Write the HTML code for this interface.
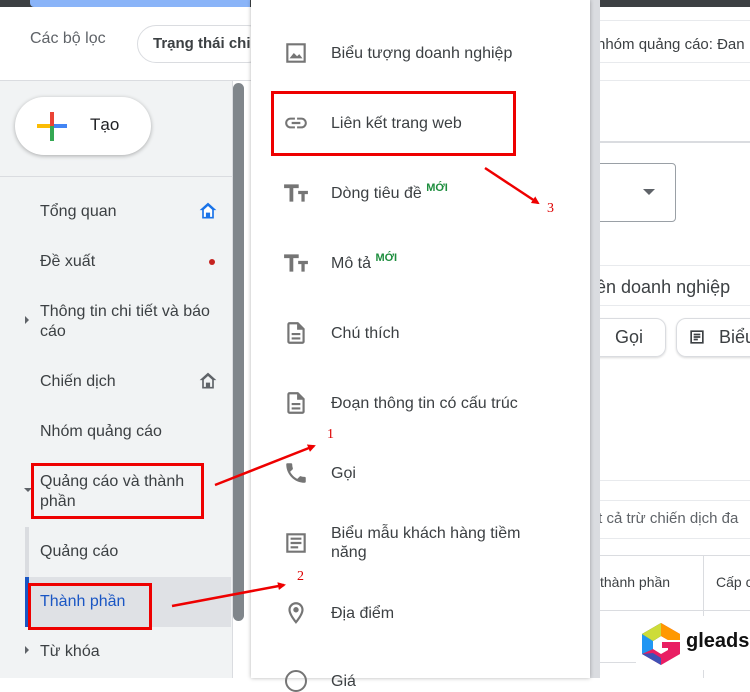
<!DOCTYPE html>
<html><head><meta charset="utf-8"><style>
*{margin:0;padding:0;box-sizing:border-box}
body{width:750px;height:678px;overflow:hidden;position:relative;background:#fff;font-family:"Liberation Sans",Arial,sans-serif;color:#3c4043}
.a{position:absolute;white-space:nowrap}
.nav{position:absolute;left:40px;font-size:16px;color:#3c4043;line-height:20px}
.mi{position:absolute;left:331px;font-size:16px;color:#3c4043;line-height:19px}
.ic{position:absolute;left:283px;width:26px;height:26px}
.new{color:#1e8e3e;font-size:11px;font-weight:bold;vertical-align:top;position:relative;top:-5px}
.rb{position:absolute;border:3px solid #ee0000}
.num{position:absolute;color:#d00;font-family:"Liberation Serif",serif;font-size:14px}
</style></head><body>
<div class="a" style="left:0;top:0;width:750px;height:7px;background:#3c4043"></div>
<div class="a" style="left:30px;top:0;width:220px;height:7px;background:#8ab4f8;border-radius:0 0 0 4px"></div>
<div class="a" style="left:0;top:80px;width:251px;height:1px;background:#dadce0"></div>
<div class="a" style="left:30px;top:30px;font-size:16px;color:#5f6368">Các bộ lọc</div>
<div class="a" style="left:137px;top:25px;width:130px;height:38px;border:1px solid #dadce0;border-radius:19px;font-size:15px;font-weight:bold;padding:9px 0 0 15px;color:#3c4043">Trạng thái chi</div>
<div class="a" style="left:0;top:81px;width:232px;height:597px;background:#f1f3f4"></div>
<div class="a" style="left:0;top:176px;width:232px;height:1px;background:#dadce0"></div>
<div class="a" style="left:232px;top:81px;width:1px;height:597px;background:#dadce0"></div>
<div class="a" style="left:233px;top:83px;width:11px;height:538px;background:#80868b;border-radius:6px"></div>
<div class="a" style="left:15px;top:97px;width:136px;height:58px;background:#fff;border-radius:29px;box-shadow:0 1px 4px rgba(0,0,0,.3)"></div>
<div class="a" style="left:37px;top:124px;width:30px;height:4px;background:#fbbc04"></div>
<div class="a" style="left:50px;top:112px;width:4px;height:14px;background:#ea4335"></div>
<div class="a" style="left:50px;top:126px;width:4px;height:15px;background:#34a853"></div>
<div class="a" style="left:54px;top:124px;width:13px;height:4px;background:#4285f4"></div>
<div class="a" style="left:90px;top:115px;font-size:17px;color:#202124">Tạo</div>
<div class="nav" style="top:202px">Tổng quan</div>
<svg class="a" style="left:198px;top:201px" width="20" height="20" viewBox="0 0 24 24"><path d="M12 2L2 11h3v10h14V11h3z" fill="#1a73e8"/><path d="M12 6l-5 4.5V19h2.5v-5h5v5H17v-8.5z" fill="#fff"/></svg>
<div class="nav" style="top:252px">Đề xuất</div>
<div class="a" style="left:209px;top:259px;width:6px;height:6px;border-radius:3px;background:#c5221f"></div>
<div class="a" style="left:25px;top:316px;width:0;height:0;border-top:4px solid transparent;border-bottom:4px solid transparent;border-left:4px solid #5f6368"></div>
<div class="nav" style="top:302px">Thông tin chi tiết và báo<br>cáo</div>
<div class="nav" style="top:372px">Chiến dịch</div>
<svg class="a" style="left:198px;top:371px" width="20" height="20" viewBox="0 0 24 24"><path d="M12 2L2 11h3v10h14V11h3z" fill="#5f6368"/><path d="M12 6l-5 4.5V19h2.5v-5h5v5H17v-8.5z" fill="#f1f3f4"/></svg>
<div class="nav" style="top:422px">Nhóm quảng cáo</div>
<div class="a" style="left:24px;top:488px;border-left:4px solid transparent;border-right:4px solid transparent;border-top:4px solid #5f6368"></div>
<div class="nav" style="top:472px">Quảng cáo và thành<br>phần</div>
<div class="a" style="left:25px;top:527px;width:4px;height:50px;background:#dadce0"></div>
<div class="nav" style="top:542px">Quảng cáo</div>
<div class="a" style="left:25px;top:577px;width:206px;height:50px;background:#dfe1e5"></div>
<div class="a" style="left:25px;top:577px;width:4px;height:50px;background:#1a56c4"></div>
<div class="nav" style="top:592px;color:#1a56c4">Thành phần</div>
<div class="a" style="left:25px;top:646px;border-top:4px solid transparent;border-bottom:4px solid transparent;border-left:4px solid #5f6368"></div>
<div class="nav" style="top:642px">Từ khóa</div>
<div class="a" style="left:600px;top:20px;width:150px;height:1px;background:#e8eaed"></div>
<div class="a" style="left:597px;top:36px;font-size:15px;color:#3c4043">nhóm quảng cáo: Đan</div>
<div class="a" style="left:600px;top:62px;width:150px;height:1px;background:#e8eaed"></div>
<div class="a" style="left:600px;top:80px;width:150px;height:1px;background:#e8eaed"></div>
<div class="a" style="left:600px;top:141px;width:150px;height:2px;background:#dadce0"></div>
<div class="a" style="left:560px;top:163px;width:116px;height:59px;border:1px solid #9aa0a6;border-radius:4px"></div>
<div class="a" style="left:643px;top:189px;border-left:6px solid transparent;border-right:6px solid transparent;border-top:6px solid #5f6368"></div>
<div class="a" style="left:600px;top:265px;width:150px;height:1px;background:#e8eaed"></div>
<div class="a" style="left:592px;top:277px;font-size:18px;color:#3c4043">iên doanh nghiệp</div>
<div class="a" style="left:600px;top:305px;width:150px;height:1px;background:#e8eaed"></div>
<div class="a" style="left:560px;top:318px;width:106px;height:39px;border:1px solid #dadce0;border-radius:10px;box-shadow:0 1px 2px rgba(0,0,0,.15)"></div>
<div class="a" style="left:615px;top:327px;font-size:18px">Gọi</div>
<div class="a" style="left:676px;top:318px;width:100px;height:39px;border:1px solid #dadce0;border-radius:10px;box-shadow:0 1px 2px rgba(0,0,0,.15)"></div>
<svg class="a" style="left:687px;top:327px" width="20" height="20" viewBox="0 0 24 24"><path d="M4 4h16v16H4z M6 6v12h12V6z M8 8h8v2H8z M8 11h8v2H8z M8 14h5v2H8z" fill="#3c4043" fill-rule="evenodd"/></svg>
<div class="a" style="left:719px;top:327px;font-size:18px">Biểu</div>
<div class="a" style="left:600px;top:480px;width:150px;height:1px;background:#e8eaed"></div>
<div class="a" style="left:600px;top:500px;width:150px;height:1px;background:#e8eaed"></div>
<div class="a" style="left:594px;top:510px;font-size:15px;color:#5f6368">ít cả trừ chiến dịch đa</div>
<div class="a" style="left:600px;top:538px;width:150px;height:1px;background:#e8eaed"></div>
<div class="a" style="left:600px;top:555px;width:150px;height:1px;background:#dadce0"></div>
<div class="a" style="left:703px;top:555px;width:1px;height:123px;background:#dadce0"></div>
<div class="a" style="left:600px;top:574px;font-size:14px;color:#3c4043">thành phần</div>
<div class="a" style="left:716px;top:574px;font-size:14px;color:#3c4043">Cấp c</div>
<div class="a" style="left:600px;top:610px;width:150px;height:1px;background:#dadce0"></div>
<div class="a" style="left:600px;top:662px;width:150px;height:1px;background:#dadce0"></div>
<div class="a" style="left:636px;top:616px;width:114px;height:54px;background:#fff"></div>
<svg class="a" style="left:640px;top:622px" width="42" height="44" viewBox="0 0 42 44"><path d="M21 1L40 12v6H28l-7-4-8 5v8l8 5 7-4v-2h-6v-6h18v12L21 43 2 32V12z" fill="#e91e63"/><path d="M21 1L40 12v6H28l-7-4z" fill="#ff9800"/><path d="M21 1L2 12v20l11-5V19l8-5z" fill="#4caf50"/><path d="M2 12l11 7v8L2 32z" fill="#2196f3"/><path d="M2 32l19 11V36l-8-5z" fill="#3f51b5"/><path d="M21 1v13l-8 5L2 12z" fill="#cddc39"/></svg>
<div class="a" style="left:686px;top:630px;font-size:20px;font-weight:bold;color:#111">gleads</div>
<div class="a" style="left:590px;top:0;width:10px;height:678px;background:#dadce0"></div>
<div class="a" style="left:251px;top:0;width:339px;height:678px;background:#fff;box-shadow:0 0 4px rgba(0,0,0,.3)"></div>
<svg class="ic" style="top:40px" viewBox="0 0 24 24"><path d="M3 3h18v18H3z M5 5v14h14V5z" fill="#757575" fill-rule="evenodd"/><path d="M6 17l4-5 3 3 2-2 3 4z" fill="#757575"/></svg>
<div class="mi" style="top:44px">Biểu tượng doanh nghiệp</div>
<svg class="ic" style="top:110px" viewBox="0 0 24 24"><path d="M3.9 12c0-1.7 1.4-3.1 3.1-3.1h4V7H7c-2.8 0-5 2.2-5 5s2.2 5 5 5h4v-1.9H7c-1.7 0-3.1-1.4-3.1-3.1zM8 13h8v-2H8zm9-6h-4v1.9h4c1.7 0 3.1 1.4 3.1 3.1s-1.4 3.1-3.1 3.1h-4V17h4c2.8 0 5-2.2 5-5s-2.2-5-5-5z" fill="#757575"/></svg>
<div class="mi" style="top:114px">Liên kết trang web</div>
<svg class="ic" style="top:180px" viewBox="0 0 24 24"><path d="M1 4v3.5h5V20h3.5V7.5h5V4z M14 10v3h3v7h3v-7h3v-3z" fill="#757575"/></svg>
<div class="mi" style="top:184px">Dòng tiêu đề <span class="new">MỚI</span></div>
<svg class="ic" style="top:250px" viewBox="0 0 24 24"><path d="M1 4v3.5h5V20h3.5V7.5h5V4z M14 10v3h3v7h3v-7h3v-3z" fill="#757575"/></svg>
<div class="mi" style="top:254px">Mô tả <span class="new">MỚI</span></div>
<svg class="ic" style="top:320px" viewBox="0 0 24 24"><path d="M14 2H6c-1.1 0-2 .9-2 2v16c0 1.1.9 2 2 2h12c1.1 0 2-.9 2-2V8zm4 18H6V4h7v5h5zM8 12h8v2H8zm0 4h8v2H8z" fill="#757575"/></svg>
<div class="mi" style="top:324px">Chú thích</div>
<svg class="ic" style="top:390px" viewBox="0 0 24 24"><path d="M14 2H6c-1.1 0-2 .9-2 2v16c0 1.1.9 2 2 2h12c1.1 0 2-.9 2-2V8zm4 18H6V4h7v5h5zM8 12h8v2H8zm0 4h8v2H8z" fill="#757575"/></svg>
<div class="mi" style="top:394px">Đoạn thông tin có cấu trúc</div>
<svg class="ic" style="top:460px" viewBox="0 0 24 24"><path d="M6.6 10.8c1.4 2.8 3.8 5.1 6.6 6.6l2.2-2.2c.3-.3.7-.4 1-.2 1.1.4 2.3.6 3.6.6.6 0 1 .4 1 1V20c0 .6-.4 1-1 1C10.6 21 3 13.4 3 4c0-.6.4-1 1-1h3.5c.6 0 1 .4 1 1 0 1.3.2 2.5.6 3.6.1.3 0 .7-.2 1z" fill="#757575"/></svg>
<div class="mi" style="top:464px">Gọi</div>
<svg class="ic" style="top:530px" viewBox="0 0 24 24"><path d="M3 3h18v18H3z M5 5v14h14V5z M7 7h10v2H7z M7 11h10v2H7z M7 15h7v2H7z" fill="#757575" fill-rule="evenodd"/></svg>
<div class="mi" style="top:524px">Biểu mẫu khách hàng tiềm<br>năng</div>
<svg class="ic" style="top:600px" viewBox="0 0 24 24"><path d="M12 2C8.1 2 5 5.1 5 9c0 5.2 7 13 7 13s7-7.8 7-13c0-3.9-3.1-7-7-7zM7 9c0-2.8 2.2-5 5-5s5 2.2 5 5c0 2.9-2.9 7.2-5 9.9C9.9 16.2 7 11.9 7 9z M12 6.5a2.5 2.5 0 100 5 2.5 2.5 0 000-5z" fill="#757575"/></svg>
<div class="mi" style="top:604px">Địa điểm</div>
<div class="a" style="left:285px;top:670px;width:22px;height:22px;border:2px solid #757575;border-radius:11px"></div>
<div class="mi" style="top:672px">Giá</div>
<div class="rb" style="left:271px;top:91px;width:245px;height:65px"></div>
<div class="rb" style="left:31px;top:463px;width:173px;height:56px"></div>
<div class="rb" style="left:28px;top:583px;width:124px;height:47px"></div>
<svg class="a" style="left:0;top:0" width="750" height="678"><defs><marker id="m" markerWidth="8" markerHeight="8" refX="6" refY="4" orient="auto" markerUnits="userSpaceOnUse"><path d="M0 0L8 4L0 8z" fill="#e00"/></marker></defs>
<line x1="215" y1="485" x2="314" y2="446" stroke="#e00" stroke-width="2.5" marker-end="url(#m)"/>
<line x1="172" y1="606" x2="284" y2="585" stroke="#e00" stroke-width="2.5" marker-end="url(#m)"/>
<line x1="485" y1="168" x2="538" y2="203" stroke="#e00" stroke-width="2.5" marker-end="url(#m)"/></svg>
<div class="num" style="left:327px;top:427px">1</div>
<div class="num" style="left:297px;top:569px">2</div>
<div class="num" style="left:547px;top:201px">3</div>
</body></html>
